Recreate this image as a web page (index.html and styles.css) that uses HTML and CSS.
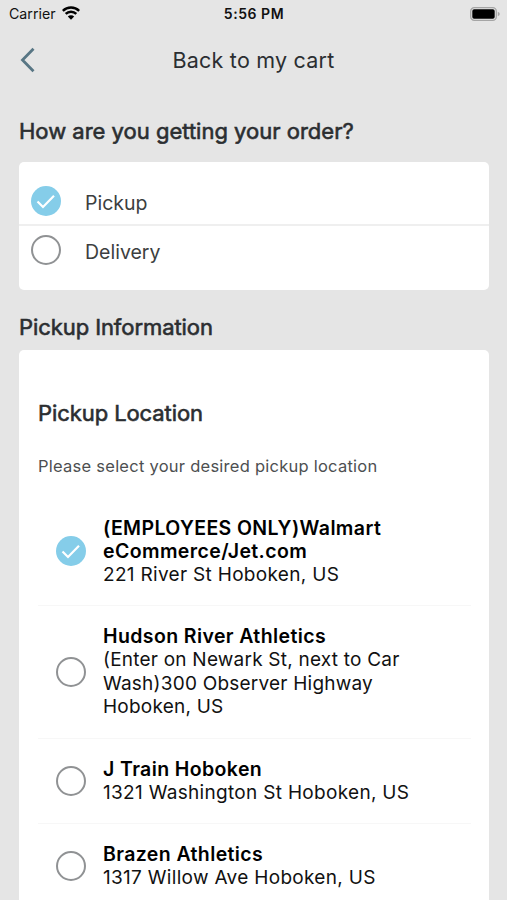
FILE: index.html
```html
<!DOCTYPE html>
<html lang="en">
<head>
<meta charset="utf-8">
<title>Back to my cart</title>
<link rel="stylesheet" href="styles.css">
</head>
<body>
<div class="status">
  <div class="carrier"><span>Carrier</span>
    <svg class="wifi" width="18" height="14" viewBox="0 0 18 14"><path d="M.8 4.9A11.6 11.6 0 0 1 17.2 4.9M3.7 7.9A7.5 7.5 0 0 1 14.3 7.9" fill="none" stroke="#000" stroke-width="2.5"/><path d="M9 13.8 5.8 10.5a4.5 4.5 0 0 1 6.4 0z"/></svg>
  </div>
  <div class="time">5:56 PM</div>
  <svg class="battery" width="31" height="14" viewBox="0 0 31 14"><rect x=".7" y=".7" width="25.6" height="12.6" rx="3.6" fill="none" stroke="#a5a5a5" stroke-width="1.3"/><rect x="2.3" y="2.3" width="22.4" height="9.4" rx="1.8"/><path d="M27.8 4.8q2 .8 2 2.2t-2 2.2z" fill="#a5a5a5"/></svg>
</div>
<header class="nav">
  <svg class="back" width="17" height="26" viewBox="0 0 17 26"><path d="M14.5 1.8 3.5 13l11 11.2" fill="none" stroke="#587684" stroke-width="2.8"/></svg>
  <h1 class="title">Back to my cart</h1>
</header>
<main>
  <h2 class="heading order-heading">How are you getting your order?</h2>
  <section class="card methods">
    <div class="method first"><span class="radio checked"><svg width="30" height="30" viewBox="0 0 30 30"><path d="M6.5 15.5 12 21 23 9.8" fill="none" stroke="#fff" stroke-width="2.2"/></svg></span><span class="label">Pickup</span></div>
    <div class="method"><span class="radio"></span><span class="label">Delivery</span></div>
  </section>
  <h2 class="heading info-heading">Pickup Information</h2>
  <section class="card locations">
    <h3 class="heading">Pickup Location</h3>
    <p class="hint">Please select your desired pickup location</p>
    <div class="place">
      <span class="radio checked"><svg width="30" height="30" viewBox="0 0 30 30"><path d="M6.5 15.5 12 21 23 9.8" fill="none" stroke="#fff" stroke-width="2.2"/></svg></span>
      <div class="text"><strong>(EMPLOYEES ONLY)Walmart<br>eCommerce/Jet.com</strong><span>221 River St Hoboken, US</span></div>
    </div>
    <div class="place long">
      <span class="radio"></span>
      <div class="text"><strong>Hudson River Athletics</strong><span>(Enter on Newark St, next to Car<br>Wash)300 Observer Highway<br>Hoboken, US</span></div>
    </div>
    <div class="place">
      <span class="radio"></span>
      <div class="text"><strong>J Train Hoboken</strong><span>1321 Washington St Hoboken, US</span></div>
    </div>
    <div class="place">
      <span class="radio"></span>
      <div class="text"><strong>Brazen Athletics</strong><span>1317 Willow Ave Hoboken, US</span></div>
    </div>
  </section>
</main>
</body>
</html>
```
FILE: styles.css
```css
* { box-sizing: border-box; }
html, body { height: 100%; }
body { margin: 0; overflow: hidden; background: #e5e5e5; color: #2b2e31; font-family: Inter, "Liberation Sans", sans-serif; display: flex; flex-direction: column; }
h1, h2, h3, p { margin: 0; font-weight: 400; }
svg { display: block; flex: none; }
.status { height: 27px; flex: none; display: grid; grid-template-columns: 1fr auto 1fr; align-items: center; padding: 0 6px 0 9px; color: #111; }
.carrier { display: flex; align-items: center; gap: 6px; font-size: 14.2px; }
.wifi { margin-top: -2px; }
.time { font-size: 14px; font-weight: 600; letter-spacing: .55px; margin-right: 2px; }
.battery { justify-self: end; }
.nav { height: 66px; flex: none; display: grid; grid-template-columns: 40px 1fr 40px; align-items: center; padding: 0 19px; }
.title { text-align: center; font-size: 21.5px; letter-spacing: .22px; }
main { flex: 1; min-height: 0; padding: 0 18px 0 19px; display: flex; flex-direction: column; }
.heading { font-size: 22px; line-height: 28px; letter-spacing: -.08px; -webkit-text-stroke: .6px #2b2e31; white-space: nowrap; }
.order-heading { margin: 24px 0 17px; letter-spacing: 0; }
.info-heading { margin: 23px 0 9px; }
.card { background: #fff; border-radius: 5px; }
.methods { height: 128px; flex: none; padding: 15px 0; }
.method { height: 49px; display: flex; align-items: center; gap: 24px; padding-left: 12px; }
.method.first { border-bottom: 2px solid #efefef; }
.method.first .label { padding-top: 4px; }
.label { padding-top: 2px; font-size: 19.5px; color: #3c3e40; }
.radio { width: 30px; height: 30px; flex: none; border: 2px solid #909294; border-radius: 50%; }
.method:last-child .radio { margin-top: -2px; }
.radio.checked { border: 0; background: #85cde9; }
.locations { flex: 1; min-height: 0; overflow: hidden; border-radius: 5px 5px 0 0; padding: 49px 18px 0 19px; }
.hint { margin-top: 28px; font-size: 16.5px; line-height: 22px; letter-spacing: .25px; color: #4d4f51; }
.place { display: flex; align-items: center; gap: 17px; padding: 19px 0 18.7px 18px; border-bottom: 1px solid #f7f7f7; color: #111; }
.hint + .place { padding-top: 39.6px; }
.hint + .place .radio { margin-top: -1px; }
.place.long { padding-bottom: 19.4px; }
.text { font-size: 19px; line-height: 23.3px; letter-spacing: .31px; white-space: nowrap; }
.text strong, .text span { display: block; }
.text strong { font-size: 19.5px; font-weight: 600; letter-spacing: .39px; color: #000; }
.long .text span { letter-spacing: .22px; }
```
